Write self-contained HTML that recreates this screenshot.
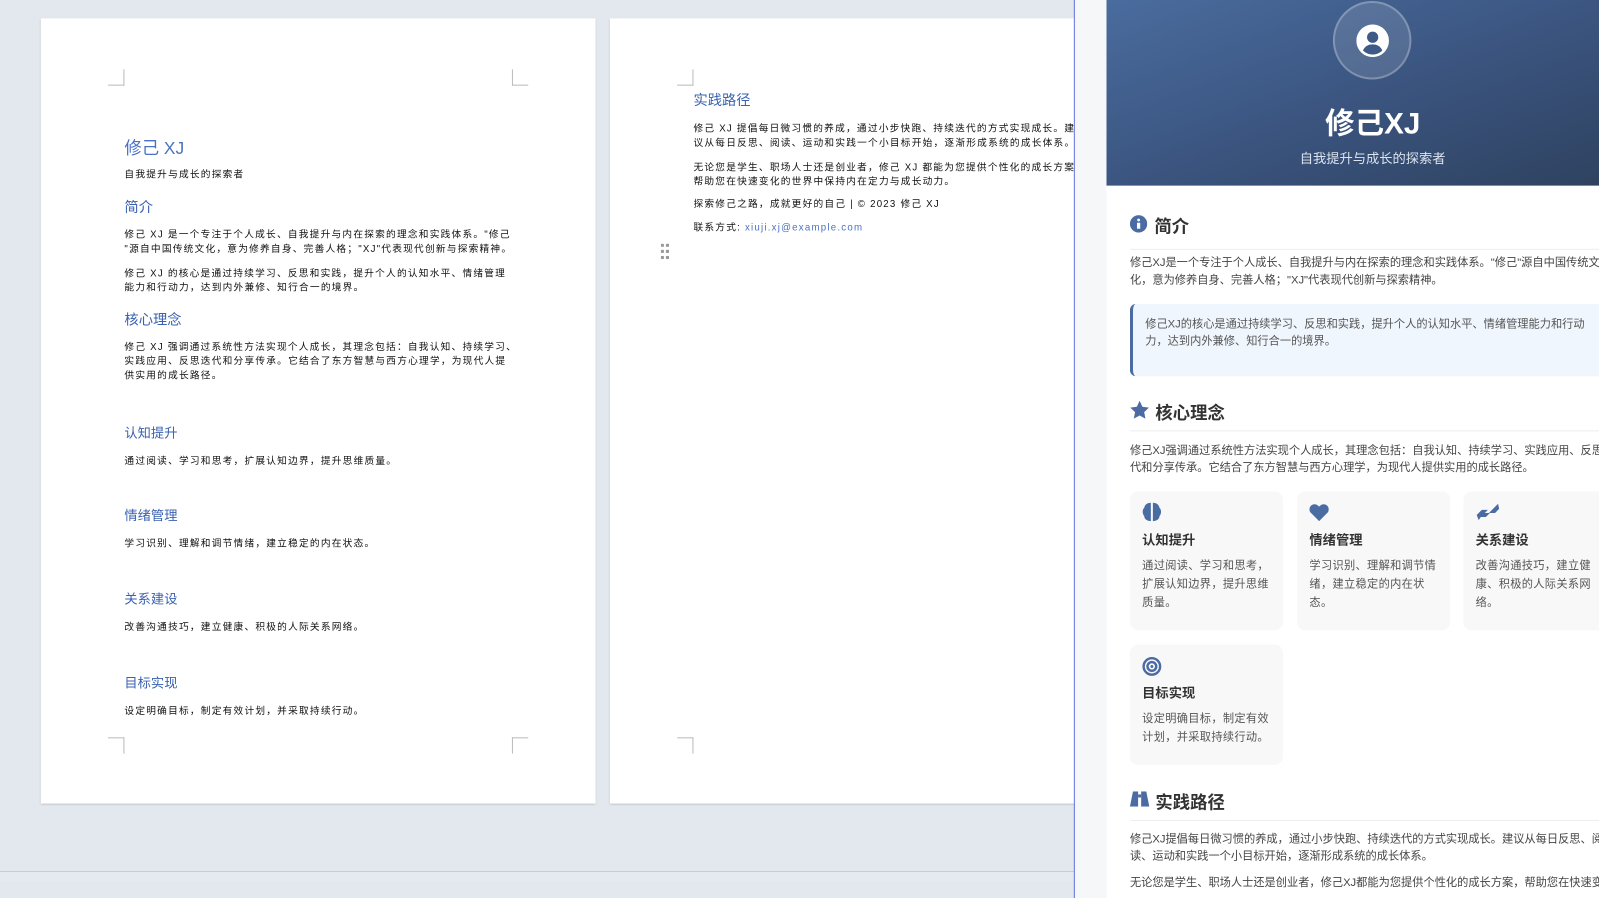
<!DOCTYPE html>
<html><head><meta charset="utf-8"><style>
*{margin:0;padding:0;box-sizing:border-box}
body{width:1599px;height:881px;overflow:hidden;background:#e2e8ee;font-family:"Liberation Sans","Noto Sans CJK SC",sans-serif;position:relative}
#w{position:absolute;left:0;top:0;width:1568px;height:864px;transform:scale(1.0198);transform-origin:0 0}
.a{position:absolute}
.page{position:absolute;background:#fff;box-shadow:0 1px 2px rgba(0,0,0,.25)}
.cm{position:absolute;width:16px;height:16px;border-color:#bbb;border-style:solid;border-width:0}
.p{position:absolute;font-size:9.5px;color:#111;line-height:14px;white-space:nowrap;letter-spacing:1.2px}
.h{position:absolute;color:#3a62b0;font-size:13px}
.rp{font-size:11px;color:#444;line-height:17px}
.card{position:absolute;background:#f8f8f9;border-radius:8px;padding:0 12px}
.card h4{font-size:13px;color:#333;font-weight:bold;position:absolute;left:12px;top:37px}
.card p{position:absolute;left:12px;top:64px;width:128px;font-size:11px;color:#555;line-height:18px;letter-spacing:.3px}
.sh{position:absolute;left:1108px;font-size:17px;font-weight:bold;color:#333}
.hr{position:absolute;left:1108px;right:0;height:1px;background:#eee}
</style></head><body>
<div class="a" style="left:0;top:871px;width:1074px;height:1px;background:#c8cdd3"></div>
<div class="a" style="left:0;top:872px;width:1074px;height:9px;background:#e5eaf0"></div>
<div id="w">
<div class="page" style="left:40px;top:18px;width:544px;height:770px">
<div class="cm" style="left:66px;top:50px;border-right-width:1px;border-bottom-width:1px"></div>
<div class="cm" style="left:462px;top:50px;border-left-width:1px;border-bottom-width:1px"></div>
<div class="cm" style="left:66px;top:705px;border-right-width:1px;border-top-width:1px"></div>
<div class="cm" style="left:462px;top:705px;border-left-width:1px;border-top-width:1px"></div>
<div class="h" style="left:82px;top:113px;font-size:17px;color:#4a72c4">修己 XJ</div>
<div class="p" style="left:82px;top:147px">自我提升与成长的探索者</div>
<div class="h" style="left:82px;top:175px;font-size:14px">简介</div>
<div class="p" style="left:82px;top:206px">修己 XJ 是一个专注于个人成长、自我提升与内在探索的理念和实践体系。"修己<br>"源自中国传统文化，意为修养自身、完善人格；"XJ"代表现代创新与探索精神。</div>
<div class="p" style="left:82px;top:244px">修己 XJ 的核心是通过持续学习、反思和实践，提升个人的认知水平、情绪管理<br>能力和行动力，达到内外兼修、知行合一的境界。</div>
<div class="h" style="left:82px;top:285px;font-size:14px">核心理念</div>
<div class="p" style="left:82px;top:316px">修己 XJ 强调通过系统性方法实现个人成长，其理念包括：自我认知、持续学习、<br>实践应用、反思迭代和分享传承。它结合了东方智慧与西方心理学，为现代人提<br>供实用的成长路径。</div>
<div class="h" style="left:82px;top:396px">认知提升</div>
<div class="p" style="left:82px;top:428px">通过阅读、学习和思考，扩展认知边界，提升思维质量。</div>
<div class="h" style="left:82px;top:477px">情绪管理</div>
<div class="p" style="left:82px;top:509px">学习识别、理解和调节情绪，建立稳定的内在状态。</div>
<div class="h" style="left:82px;top:559px">关系建设</div>
<div class="p" style="left:82px;top:591px">改善沟通技巧，建立健康、积极的人际关系网络。</div>
<div class="h" style="left:82px;top:641px">目标实现</div>
<div class="p" style="left:82px;top:673px">设定明确目标，制定有效计划，并采取持续行动。</div>
</div>

<div class="page" style="left:598px;top:18px;width:470px;height:770px;overflow:hidden">
<div class="cm" style="left:66px;top:50px;border-right-width:1px;border-bottom-width:1px"></div>
<div class="cm" style="left:66px;top:705px;border-right-width:1px;border-top-width:1px"></div>
<div class="h" style="left:82px;top:70px;font-size:14px">实践路径</div>
<div class="p" style="left:82px;top:102px">修己 XJ 提倡每日微习惯的养成，通过小步快跑、持续迭代的方式实现成长。建<br>议从每日反思、阅读、运动和实践一个小目标开始，逐渐形成系统的成长体系。</div>
<div class="p" style="left:82px;top:140px">无论您是学生、职场人士还是创业者，修己 XJ 都能为您提供个性化的成长方案，<br>帮助您在快速变化的世界中保持内在定力与成长动力。</div>
<div class="p" style="left:82px;top:176px">探索修己之路，成就更好的自己 | © 2023 修己 XJ</div>
<div class="p" style="left:82px;top:199px">联系方式: <span style="color:#4a72c4">xiuji.xj@example.com</span></div>
<svg class="a" style="left:50px;top:221px" width="10" height="16"><g fill="#999"><rect x="0" y="0" width="3" height="3"/><rect x="5" y="0" width="3" height="3"/><rect x="0" y="6" width="3" height="3"/><rect x="5" y="6" width="3" height="3"/><rect x="0" y="12" width="3" height="3"/><rect x="5" y="12" width="3" height="3"/></g></svg>
</div>

<div class="a" style="left:1053px;top:0;width:1px;height:881px;background:#5566dd"></div>
<div class="a" style="left:1054px;top:0;width:545px;height:881px;background:#f6f7f9"></div>
<div class="a" style="left:1085px;top:0;width:514px;height:881px;background:#fff;border-radius:0 10px 0 0;overflow:hidden">
<div class="a" style="left:0;top:0;width:514px;height:182px;background:linear-gradient(160deg,#4a6c9e 0%,#3b5580 50%,#2e415e 100%);border-radius:0 10px 0 0"></div>
<div class="a" style="left:222px;top:1px;width:77px;height:77px;border-radius:50%;background:rgba(255,255,255,.12);border:2px solid rgba(255,255,255,.25)"></div>
<svg class="a" style="left:245px;top:24px" width="32" height="32" viewBox="0 0 32 32"><circle cx="16" cy="16" r="16" fill="#fff"/><circle cx="16" cy="12.5" r="5.5" fill="#3e5a86"/><path d="M6.5 25.5c2-4.5 5.5-6 9.5-6s7.5 1.5 9.5 6c-2.5 2.5-6 4-9.5 4s-7-1.5-9.5-4z" fill="#3e5a86"/></svg>
<div class="a" style="left:0;width:522px;top:98px;text-align:center;color:#fff;font-size:29px;font-weight:bold">修己XJ</div>
<div class="a" style="left:0;width:522px;top:145px;text-align:center;color:#dbe3ee;font-size:13px">自我提升与成长的探索者</div>
</div>

<svg class="a" style="left:1108px;top:211px" width="17" height="17" viewBox="0 0 16 16"><circle cx="8" cy="8" r="8" fill="#4a6ca3"/><circle cx="8" cy="4.5" r="1.3" fill="#fff"/><rect x="6.5" y="7" width="3" height="5.5" fill="#fff"/></svg>
<div class="sh" style="left:1132px;top:208px">简介</div>
<div class="hr" style="top:244px"></div>
<div class="a rp" style="left:1108px;top:250px;white-space:nowrap">修己XJ是一个专注于个人成长、自我提升与内在探索的理念和实践体系。"修己"源自中国传统文<br>化，意为修养自身、完善人格；"XJ"代表现代创新与探索精神。</div>
<div class="a" style="left:1108px;top:298px;width:491px;height:71px;background:#f0f6fd;border-left:3px solid #4a6ca3;border-radius:6px 0 0 6px"></div>
<div class="a rp" style="left:1123px;top:310px;white-space:nowrap;color:#555">修己XJ的核心是通过持续学习、反思和实践，提升个人的认知水平、情绪管理能力和行动<br>力，达到内外兼修、知行合一的境界。</div>

<svg class="a" style="left:1108px;top:393px" width="19" height="18" viewBox="0 0 24 23"><path d="M12 0l3.5 7.5 8.2 1-6 5.7 1.6 8.2L12 18.4 4.7 22.4l1.6-8.2-6-5.7 8.2-1z" fill="#4a6ca3"/></svg>
<div class="sh" style="left:1133px;top:391px">核心理念</div>
<div class="hr" style="top:422px"></div>
<div class="a rp" style="left:1108px;top:434px;white-space:nowrap">修己XJ强调通过系统性方法实现个人成长，其理念包括：自我认知、持续学习、实践应用、反思迭<br>代和分享传承。它结合了东方智慧与西方心理学，为现代人提供实用的成长路径。</div>

<div class="card" style="left:1108px;top:482px;width:150px;height:136px">
<svg class="a" style="left:12px;top:10px" width="19" height="20" viewBox="0 0 19 20"><path d="M8.5 1C5 1 2.5 3 2 6 0 7.5 0 12 2 14c0 3 3 5 6.5 5z M10.5 1C14 1 16.5 3 17 6c2 1.5 2 6 0 8 0 3-3 5-6.5 5z" fill="#4a6ca3"/></svg>
<h4>认知提升</h4><p>通过阅读、学习和思考，扩展认知边界，提升思维质量。</p></div>
<div class="card" style="left:1272px;top:482px;width:150px;height:136px">
<svg class="a" style="left:12px;top:12px" width="19" height="17" viewBox="0 0 20 18"><path d="M10 18L1.5 9.5C-.5 7.5-.5 4 1.5 2 3.5 0 7 0 9 2l1 1 1-1c2-2 5.5-2 7.5 0s2 5.5 0 7.5z" fill="#4a6ca3"/></svg>
<h4>情绪管理</h4><p>学习识别、理解和调节情绪，建立稳定的内在状态。</p></div>
<div class="card" style="left:1435px;top:482px;width:150px;height:136px">
<svg class="a" style="left:12px;top:11px" width="23" height="19" viewBox="0 0 23 19"><path d="M1 12l5-5h6l-3 3h4l5-5 4-4 1 5-4 4h-5l-4 4H5l-2 3z" fill="#4a6ca3"/></svg>
<h4>关系建设</h4><p>改善沟通技巧，建立健康、积极的人际关系网络。</p></div>
<div class="card" style="left:1108px;top:632px;width:150px;height:118px">
<svg class="a" style="left:12px;top:12px" width="19" height="19" viewBox="0 0 20 20"><circle cx="10" cy="10" r="8.5" fill="none" stroke="#4a6ca3" stroke-width="2.5"/><circle cx="10" cy="10" r="4.5" fill="none" stroke="#4a6ca3" stroke-width="2.5"/><circle cx="10" cy="10" r="1.5" fill="#4a6ca3"/></svg>
<h4>目标实现</h4><p>设定明确目标，制定有效计划，并采取持续行动。</p></div>

<svg class="a" style="left:1108px;top:776px" width="19" height="15" viewBox="0 0 19 15"><path d="M3 0h5v15H0zM11 0h5l3 15h-8z" fill="#4a6ca3"/><rect x="8" y="3" width="3" height="3" fill="#4a6ca3"/></svg>
<div class="sh" style="left:1133px;top:773px">实践路径</div>
<div class="hr" style="top:804px"></div>
<div class="a rp" style="left:1108px;top:815px;white-space:nowrap">修己XJ提倡每日微习惯的养成，通过小步快跑、持续迭代的方式实现成长。建议从每日反思、阅<br>读、运动和实践一个小目标开始，逐渐形成系统的成长体系。</div>
<div class="a rp" style="left:1108px;top:858px;white-space:nowrap">无论您是学生、职场人士还是创业者，修己XJ都能为您提供个性化的成长方案，帮助您在快速变化</div>
</div>
</body></html>
